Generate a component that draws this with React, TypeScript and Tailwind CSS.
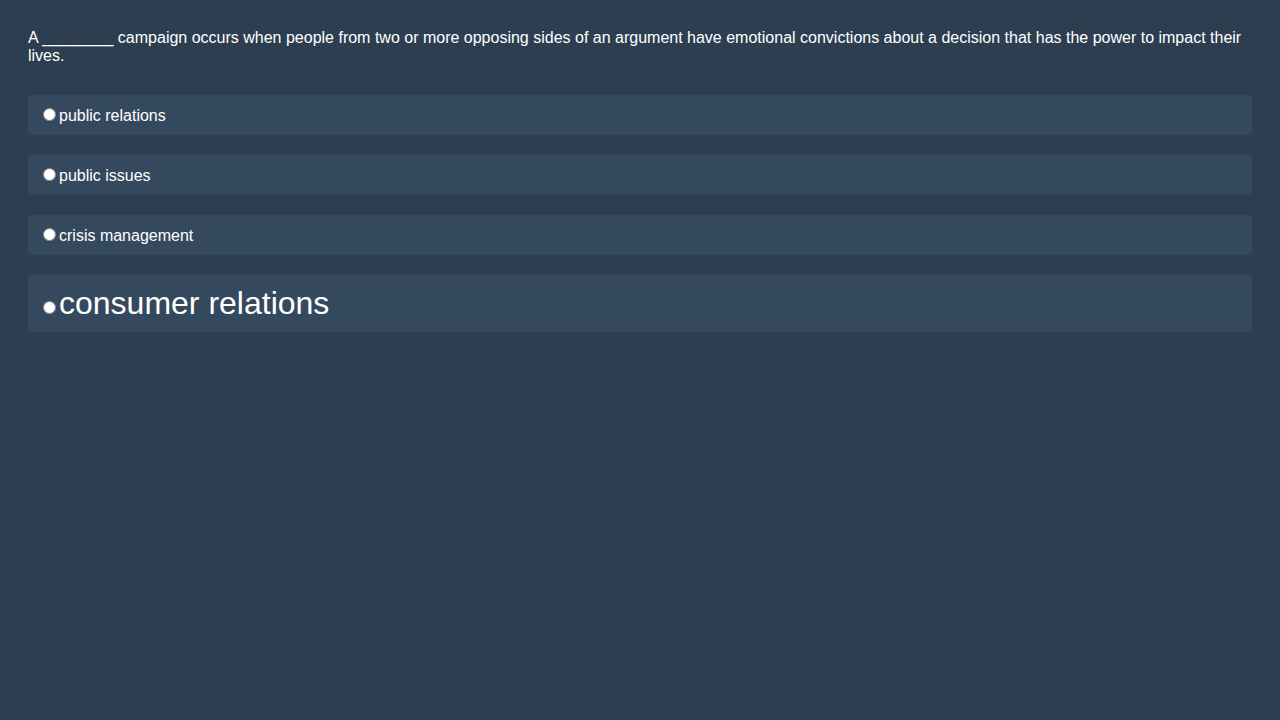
const options = [
  { id: 'a', text: 'public relations', big: false },
  { id: 'b', text: 'public issues', big: false },
  { id: 'c', text: 'crisis management', big: false },
  { id: 'd', text: 'consumer relations', big: true },
]

export default function App() {
  return (
    <div
      className="min-h-screen bg-[#2c3e50] p-[28px] text-white"
      style={{ fontFamily: '"Liberation Sans", Arial, sans-serif' }}
    >
      <p className="mt-[1px] mb-[30px] text-[16px] leading-[18px]">
        A ________ campaign occurs when people from two or more opposing sides of an argument have
        emotional convictions about a decision that has the power to impact their lives.
      </p>

      <div className="flex flex-col gap-[20px]">
        {options.map((opt) => (
          <label
            key={opt.id}
            className={`block overflow-hidden rounded-[4px] bg-[#34495e] px-[10px] py-[10px] ${
              opt.big ? 'h-[57px] text-[32px] leading-[37px]' : 'h-[40px] text-[16px] leading-[20px]'
            }`}
          >
            <input
              type="radio"
              name="answer"
              value={opt.id}
              className="ml-[5px] mr-[3px] mt-[3px] h-[13px] w-[13px]"
            />
            {opt.text}
          </label>
        ))}
      </div>
    </div>
  )
}
